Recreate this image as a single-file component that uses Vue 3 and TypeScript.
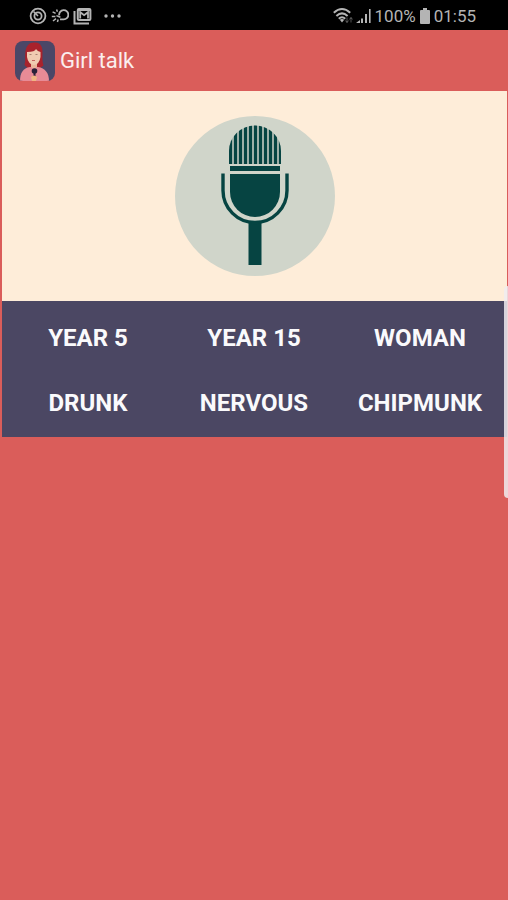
<script setup lang="ts">
const voices: string[] = ['Year 5', 'Year 15', 'Woman', 'Drunk', 'Nervous', 'Chipmunk']

const grilleStripes: { x: number; width: number }[] = [
  { x: 54, width: 3 },
  { x: 59, width: 3 },
  { x: 64, width: 3 },
  { x: 69, width: 3 },
  { x: 74, width: 3 },
  { x: 79, width: 3 },
  { x: 84, width: 3 },
  { x: 89, width: 3 },
  { x: 94, width: 3 },
  { x: 99, width: 3 },
  { x: 104, width: 2 },
]
</script>

<template>
  <div class="screen">
    <div class="status">
      <div class="group notices">
        <svg width="18" height="18" viewBox="0 0 18 18" fill="none" stroke="currentColor" stroke-width="1.8">
          <circle cx="9" cy="9" r="7.4" />
          <circle cx="9" cy="9" r="3.6" />
          <path d="M9 9L4.500 4.500" stroke-width="1.600" />
        </svg>
        <svg width="18" height="18" viewBox="0 0 18 18" fill="none" stroke="currentColor" stroke-width="1.8">
          <path d="M8.200 8.400a4.600 4.600 0 1 1 4.200 3.900H9" />
          <path d="M1.600 4.800l3 1.600M5.600 2.600l.8 2.200M.8 9.400h3.600M2 14l3-2.400M6.400 15l.8-2.400M5.400 8.600l4 1.600" stroke-width="1.500" />
        </svg>
        <svg width="19" height="18" viewBox="0 0 19 18" fill="none" stroke="currentColor" stroke-width="2">
          <path d="M1.500 4v12.400H16" />
          <rect x="4.800" y="2" width="12.600" height="11" rx="1" />
          <path d="M7.200 11.500V5.200l3.900 3 3.900-3v6.300" stroke-width="1.800" />
          <path d="M4.800 3h12.600" />
        </svg>
        <svg class="more" width="18" height="18" viewBox="0 0 18 18" fill="currentColor">
          <circle cx="2" cy="9" r="1.7" />
          <circle cx="8.500" cy="9" r="1.7" />
          <circle cx="15" cy="9" r="1.7" />
        </svg>
      </div>
      <div class="group system">
        <svg width="20" height="18" viewBox="0 0 20 18" fill="none" stroke="currentColor" stroke-width="2">
          <path d="M.8 5.800Q9-1.800 17.200 5.800M3.400 9Q9 3.800 14.600 9M5.800 11.800Q9 8.600 12.200 11.800" />
          <path d="M6.800 12.800L9 15.600l2.200-2.800Q9 11.400 6.800 12.800z" fill="currentColor" stroke="none" />
          <path d="M14 10.500v5M12.400 13.500l1.600 2 1.600-2M18 15.500v-5M16.400 12.500l1.600-2 1.600 2" stroke-width="1" opacity=".45" />
        </svg>
        <svg width="16" height="18" viewBox="0 0 16 18" fill="currentColor">
          <path d="M0 16l4-3v3zM5 11.500h2V16H5zM9 7h2v9H9zM13 2h1.600v14H13z" />
        </svg>
        <span>100%</span>
        <svg width="12" height="18" viewBox="0 0 12 18" fill="currentColor">
          <path d="M4 1h4v2h2q1 0 1 1v12q0 1-1 1H2q-1 0-1-1V4q0-1 1-1h2z" />
        </svg>
        <span>01:55</span>
      </div>
    </div>

    <header class="bar">
      <svg class="logo" width="40" height="40" viewBox="0 0 40 40">
        <clipPath id="logo-shape"><rect width="40" height="40" rx="8" /></clipPath>
        <g clip-path="url(#logo-shape)">
          <rect width="40" height="40" fill="#4b4767" />
          <path d="M9.500 24c1.500-5 0-9 1-14C11.500 4 15 1 19.500 1.500c5.500-.5 8 4 8 9 0 5-.5 10 1 14l-4 3H13z" fill="#a8222c" />
          <path d="M5 40c0-8 3-13 10-14h8c7 1 11 6 11 14z" fill="#e88b96" />
          <path d="M16 20h6v6q-3 3-6 0z" fill="#eab79b" />
          <path d="M12 11q8 0 9-3 2 3 4.500 3v5q-1 7-6.500 8-6-1-7-8z" fill="#f0cbb1" />
          <path d="M14.500 13.500h2M20.500 13.500h2" stroke="#a98070" />
          <path d="M17 19.500h3" stroke="#c4655f" />
          <circle cx="19.500" cy="30" r="2.800" fill="#2a2038" />
          <path d="M18.500 32h2v8h-2z" fill="#2a2038" />
          <path d="M16 36q3-3 6 0l-1 4h-4z" fill="#f0b583" />
        </g>
      </svg>
      <h1>Girl talk</h1>
    </header>

    <main class="content">
      <section class="stage">
        <button class="record" type="button" aria-label="Record">
          <svg class="mic" viewBox="0 0 160 160">
            <clipPath id="grille"><path d="M54 48V35a26 25.500 0 0 1 52 0v13z" /></clipPath>
            <g fill="#064442">
              <g clip-path="url(#grille)">
                <rect x="54" y="9" width="52" height="39" opacity=".25" />
                <rect v-for="stripe in grilleStripes" :key="stripe.x" :x="stripe.x" y="9" :width="stripe.width" height="39" />
              </g>
              <rect x="55" y="50" width="50" height="5" />
              <path d="M55 58h50v18a25 25 0 0 1-50 0z" />
              <rect x="73.500" y="107" width="13" height="42" />
            </g>
            <path d="M48 57.500v17a32 32 0 0 0 64 0v-17" fill="none" stroke="#064442" stroke-width="3.400" />
          </svg>
        </button>
      </section>
      <section class="voices">
        <button v-for="voice in voices" :key="voice" type="button" class="voice">{{ voice }}</button>
      </section>
    </main>

    <div class="edge-handle"></div>
  </div>
</template>

<style>
body {
  background: #da5d5a;
}
</style>

<style scoped>
.screen {
  position: relative;
  min-height: 100vh;
  overflow: hidden;
  background: #da5d5a;
  font-family: Roboto, sans-serif;
}

.status {
  display: flex;
  box-sizing: border-box;
  align-items: center;
  justify-content: space-between;
  height: 30px;
  padding: 2px 32px 0 29px;
  background: #000;
  color: #b4b4b4;
  font-size: 17px;
}

.group {
  display: flex;
  align-items: center;
  gap: 4px;
}

.system {
  gap: 3px;
}

.more {
  margin-left: 8px;
}

.bar {
  display: flex;
  align-items: center;
  gap: 5px;
  height: 61px;
  padding: 0 15px;
}

.bar h1 {
  margin: 0;
  color: #fbeeee;
  font-size: 22px;
  font-weight: 400;
}

.content {
  margin: 0 1px 0 2px;
}

.stage {
  display: flex;
  justify-content: center;
  padding: 25px 0;
  background: #feedd9;
}

.record {
  width: 160px;
  height: 160px;
  padding: 0;
  border: 0;
  border-radius: 50%;
  background: #d0d5ca;
}

.mic {
  display: block;
  width: 100%;
}

.voices {
  display: grid;
  grid-template-columns: repeat(3, 1fr);
  padding: 4px 4px 2px 3px;
  background: #4b4763;
}

.voice {
  height: 65px;
  padding: 0;
  border: 0;
  background: none;
  color: #fafafc;
  font: 700 24px Roboto, sans-serif;
  text-transform: uppercase;
}

.edge-handle {
  position: absolute;
  top: 286px;
  right: 0;
  width: 4px;
  height: 212px;
  border-radius: 4px 0 0 4px;
  background: rgba(240, 236, 240, 0.85);
}
</style>
